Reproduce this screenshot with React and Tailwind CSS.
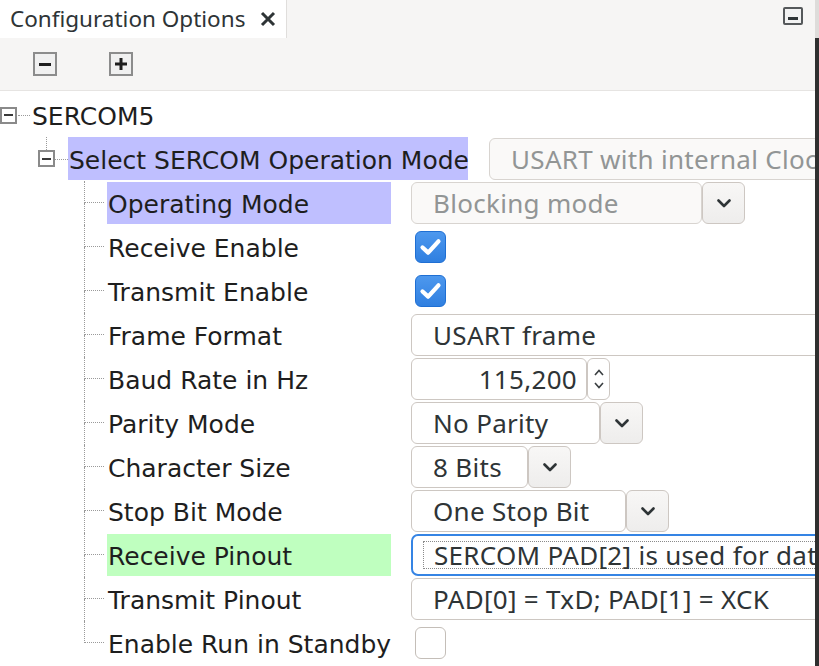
import React from "react"

const treeFont = "font-['DejaVu_Sans',sans-serif] text-[25px] text-[#1e1e1e] whitespace-nowrap"
const uiFont = "font-['Noto_Sans',sans-serif] text-[26px] tracking-[0.3px] whitespace-nowrap"

const Chevron = ({ up }) => (
  <svg width="14" height="9" viewBox="0 0 14 9">
    <path d={up ? "M1.5 7.5 L7 2 L12.5 7.5" : "M1.5 1.5 L7 7 L12.5 1.5"} fill="none" stroke="#2e3436" strokeWidth="2.6" strokeLinecap="round" strokeLinejoin="round" />
  </svg>
)

const Entry = ({ text, w, disabled, right, children }) => (
  <div className={`${w} h-[42px] shrink-0 rounded-[6px] border flex items-center ${right ? "justify-end pr-[9px]" : "pl-[21px]"} ${disabled ? "bg-[#faf9f8] border-[#d8d4d0] text-[#929595]" : "bg-white border-[#cdc7c2] text-[#2e3436]"} ${uiFont}`}>
    {children || text}
  </div>
)

const DropBtn = () => (
  <div className="w-[43px] h-[42px] shrink-0 rounded-[6px] border border-[#cdc7c2] bg-gradient-to-b from-[#f8f7f6] to-[#eeedec] flex items-center justify-center">
    <Chevron />
  </div>
)

const Combo = ({ text, w, disabled }) => (
  <div className="flex shrink-0">
    <Entry text={text} w={w} disabled={disabled} />
    <DropBtn />
  </div>
)

const Check = ({ on }) => (
  <div className={`ml-[4px] w-[31px] h-[32px] shrink-0 rounded-[6px] border flex items-center justify-center ${on ? "bg-gradient-to-b from-[#4d98ee] to-[#2f7fe0] border-[#1f6fd3]" : "bg-white border-[#c4beb8]"}`}>
    {on && (
      <svg width="31" height="32" viewBox="0 0 31 32">
        <path d="M7 16.5 L13 22 L24 10" fill="none" stroke="#fff" strokeWidth="4.6" strokeLinecap="round" strokeLinejoin="round" />
      </svg>
    )}
  </div>
)

const Spin = () => (
  <div className="flex shrink-0">
    <Entry text="115,200" w="w-[176px]" right />
    <div className="w-[23px] h-[42px] rounded-[6px] border border-[#cdc7c2] bg-white flex flex-col items-center justify-center gap-[6px]">
      <svg width="10" height="7" viewBox="0 0 10 7"><path d="M1 6 L5 1.5 L9 6" fill="none" stroke="#3a3f41" strokeWidth="1.6" /></svg>
      <svg width="10" height="7" viewBox="0 0 10 7"><path d="M1 1 L5 5.5 L9 1" fill="none" stroke="#3a3f41" strokeWidth="1.6" /></svg>
    </div>
  </div>
)

const Focused = ({ text }) => (
  <div className={`w-[440px] h-[42px] shrink-0 rounded-[7px] border-2 border-[#3584e4] bg-white flex items-center text-[#2e3436] overflow-hidden ${uiFont}`}>
    <div className="ml-[10px] h-[28px] flex-1 border border-dotted border-[#8a8a8a] flex items-center pl-[10px]">{text}</div>
  </div>
)

const Expander = () => (
  <div className="w-[17px] h-[17px] shrink-0 border-2 border-[#8a8a8a] bg-white flex items-center justify-center">
    <div className="w-[9px] h-[2px] bg-[#3a3a3a]" />
  </div>
)

const rows = [
  { label: "Operating Mode", hl: "bg-[#bfbfff]", w: <Combo text="Blocking mode" w="w-[291px]" disabled /> },
  { label: "Receive Enable", w: <Check on /> },
  { label: "Transmit Enable", w: <Check on /> },
  { label: "Frame Format", w: <Entry text="USART frame" w="w-[440px]" /> },
  { label: "Baud Rate in Hz", w: <Spin /> },
  { label: "Parity Mode", w: <Combo text="No Parity" w="w-[189px]" /> },
  { label: "Character Size", w: <Combo text="8 Bits" w="w-[117px]" /> },
  { label: "Stop Bit Mode", w: <Combo text="One Stop Bit" w="w-[215px]" /> },
  { label: "Receive Pinout", hl: "bg-[#bfffbf]", w: <Focused text="SERCOM PAD[2] is used for data" /> },
  { label: "Transmit Pinout", w: <Entry text="PAD[0] = TxD; PAD[1] = XCK" w="w-[440px]" /> },
  { label: "Enable Run in Standby", w: <Check /> },
]

export default function App() {
  return (
    <div className="w-[819px] h-[666px] flex bg-white overflow-hidden">
      <div className="w-[815px] flex flex-col overflow-hidden">
        {/* tab header */}
        <div className="h-[38px] shrink-0 flex bg-[#f6f5f4]">
          <div className="w-[287px] bg-white border-r border-[#e0dedc] flex items-center pl-[10px]">
            <span className="font-['Noto_Sans',sans-serif] text-[22.5px] text-[#2e3436]">Configuration Options</span>
            <svg className="ml-[15px]" width="16" height="16" viewBox="0 0 16 16">
              <path d="M2 2 L14 14 M14 2 L2 14" stroke="#2e3436" strokeWidth="3" />
            </svg>
          </div>
          <div className="flex-1 flex justify-end pt-[7px] pr-[12px]">
            <div className="w-[20px] h-[18px] border-2 border-[#55585a] rounded-[2px] bg-[#f2f2f2] flex items-end justify-center pb-[3px]">
              <div className="w-[10px] h-[3px] bg-[#2e3436]" />
            </div>
          </div>
        </div>

        {/* toolbar */}
        <div className="h-[53px] shrink-0 bg-[#f6f5f4] border-b border-[#e6e4e2] flex items-center pl-[33px] gap-[52px]">
          <div className="w-[24px] h-[24px] border-2 border-[#8c8c8c] bg-[#f0f0f0] flex items-center justify-center">
            <div className="w-[12px] h-[3px] bg-[#1e1e1e]" />
          </div>
          <div className="w-[24px] h-[24px] border-2 border-[#8c8c8c] bg-[#f0f0f0] flex items-center justify-center">
            <svg width="12" height="12" viewBox="0 0 12 12"><path d="M0 6 H12 M6 0 V12" stroke="#1e1e1e" strokeWidth="3" /></svg>
          </div>
        </div>

        {/* tree */}
        <div className="flex flex-col pt-[2px]">
          <div className="h-[44px] flex items-center">
            <Expander />
            <div className="w-[12px] ml-[1px] border-t border-dotted border-[#9a9a9a]" />
            <span className={`ml-[2px] pt-[4px] ${treeFont}`}>SERCOM5</span>
          </div>

          <div className="h-[44px] flex items-center">
            <div className="w-[38px] shrink-0" />
            <div className="flex flex-col items-center h-full">
              <div className="h-[13px] border-l border-dotted border-[#9a9a9a]" />
              <Expander />
            </div>
            <div className="w-[13px] shrink-0 border-t border-dotted border-[#9a9a9a]" />
            <div className={`w-[400px] h-[43px] shrink-0 self-start bg-[#bfbfff] flex items-center pl-[1px] pt-[4px] ${treeFont}`}>Select SERCOM Operation Mode</div>
            <div className="ml-[21px] flex shrink-0">
              <Entry text="USART with internal Clock" w="w-[360px]" disabled />
            </div>
          </div>

          {rows.map((r, i) => (
            <div key={r.label} className="h-[44px] flex items-center">
              <div className="w-[84px] shrink-0" />
              <div className="w-[20px] h-full shrink-0 flex flex-col">
                <div className="h-[22px] border-l border-b border-dotted border-[#9a9a9a]" />
                <div className={`flex-1 ${i < rows.length - 1 ? "border-l border-dotted border-[#9a9a9a]" : ""}`} />
              </div>
              <div className={`ml-[3px] w-[284px] h-[42px] shrink-0 flex items-center pl-[1px] pt-[4px] ${r.hl || ""} ${treeFont}`}>{r.label}</div>
              <div className="ml-[20px] flex shrink-0">{r.w}</div>
            </div>
          ))}
        </div>
      </div>
      <div className="w-[4px] flex flex-col">
        <div className="h-[38px] bg-[#dedcda]" />
        <div className="flex-1 bg-[#2f2f2f]" />
      </div>
    </div>
  )
}
